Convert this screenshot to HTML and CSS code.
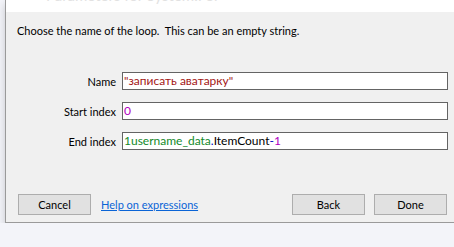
FILE: index.html
```html
<!DOCTYPE html>
<html lang="en">
<head>
  <meta charset="UTF-8">
  <title>Parameters for System.For</title>
  <link rel="stylesheet" href="styles.css">
</head>
<body>

<div class="dialog">
  <div class="titlebar"><span class="title">Parameters for System.For</span></div>

  <div class="body">
    <p class="hint">Choose the name of the loop.&nbsp; This can be an empty string.</p>

    <div class="fields">
      <label class="field-label" for="name">Name</label>
      <div class="field" id="name"><span class="str">"записать аватарку"</span></div>

      <label class="field-label" for="start">Start index</label>
      <div class="field" id="start"><span class="num">0</span></div>

      <label class="field-label" for="end">End index</label>
      <div class="field" id="end"><span class="ident">1username_data</span><span class="op">.</span>ItemCount<span class="op">-</span><span class="num">1</span></div>
    </div>

    <div class="buttons">
      <button class="btn">Cancel</button>
      <a class="help" href="#">Help on expressions</a>
      <span class="spacer"></span>
      <button class="btn">Back</button>
      <button class="btn">Done</button>
    </div>
  </div>
</div>

</body>
</html>
```

FILE: styles.css
```css
/* Reset */
* {
  margin: 0;
  padding: 0;
  box-sizing: border-box;
}

body {
  font-family: 'Lato', sans-serif;
  font-size: 11px;
  color: #000;
  background: #f3f4f9;
  padding-left: 5px;
  overflow: hidden;
}

/* Dialog window */
.dialog {
  width: 449px;
  background: #f0f0f0;
  border-left: 1px solid #9a9a9a;
  border-bottom: 1px solid #9a9a9a;
  box-shadow: 0 4px 8px rgba(0, 0, 0, 0.18);
}

.titlebar {
  height: 12px;
  background: #fff;
  overflow: hidden;
  padding-left: 40px;
}

.title {
  display: block;
  margin-top: -13px;
  font-size: 15px;
  line-height: 16px;
  color: #e2e2e2;
}

.body {
  padding: 11px 0 7px 11px;
}

.hint {
  font-size: 11px;
  line-height: 16px;
}

/* Field grid */
.fields {
  display: grid;
  grid-template-columns: 99px 326px;
  column-gap: 6px;
  row-gap: 12px;
  align-items: center;
  margin-top: 33px;
}

.field-label {
  text-align: right;
  color: #000;
}

.field {
  height: 18px;
  background: #fff;
  border: 1px solid #646464;
  padding: 0 1px;
  font-size: 12px;
  line-height: 15px;
  white-space: nowrap;
}

.str { color: #a31515; }
.num { color: #b000c0; }
.ident { color: #13892a; }
.op { color: #0000c0; }

/* Bottom row */
.buttons {
  display: flex;
  align-items: center;
  margin-top: 44px;
  width: 430px;
  padding-left: 1px;
}

.btn {
  width: 73px;
  height: 21px;
  font-family: inherit;
  font-size: 11px;
  background: #e1e1e1;
  border: 1px solid #adadad;
  color: #000;
}

.btn + .btn {
  margin-left: 9px;
}

.help {
  margin-left: 10px;
  color: #0a64d6;
}

.spacer {
  flex: 1;
}
```
